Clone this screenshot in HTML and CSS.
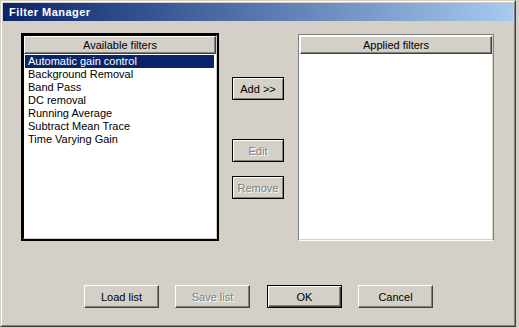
FILE: index.html
```html
<!DOCTYPE html>
<html>
<head>
<meta charset="utf-8">
<title>Filter Manager</title>
<link rel="stylesheet" href="styles.css">
</head>
<body>
<div class="window">
  <div class="frame">
    <div class="titlebar">Filter Manager</div>
    <div class="content">
      <div class="main">
        <div class="listbox focused">
          <div class="lb-inner">
            <div class="header">Available filters</div>
            <ul class="items">
              <li class="item selected">Automatic gain control</li>
              <li class="item">Background Removal</li>
              <li class="item">Band Pass</li>
              <li class="item">DC removal</li>
              <li class="item">Running Average</li>
              <li class="item">Subtract Mean Trace</li>
              <li class="item">Time Varying Gain</li>
            </ul>
          </div>
        </div>
        <div class="midcol">
          <div class="btn flat btn-add">Add &gt;&gt;</div>
          <div class="btn flat disabled btn-edit">Edit</div>
          <div class="btn flat disabled btn-remove">Remove</div>
        </div>
        <div class="listbox applied">
          <div class="lb-inner">
            <div class="header">Applied filters</div>
            <ul class="items"></ul>
          </div>
        </div>
      </div>
      <div class="actions">
        <div class="btn wide">Load list</div>
        <div class="btn wide disabled gap16">Save list</div>
        <div class="btn wide default gap17">OK</div>
        <div class="btn wide gap16">Cancel</div>
      </div>
    </div>
  </div>
</div>
</body>
</html>
```

FILE: styles.css
```css
html, body {
  margin: 0;
  padding: 0;
  background: #d4d0c8;
}
body {
  font-family: "Liberation Sans", Arial, sans-serif;
  font-size: 11px;
  color: #000;
}
.window {
  box-sizing: border-box;
  width: 516px;
  height: 327px;
  border: 1px solid;
  border-color: #d4d0c8 #404040 #404040 #d4d0c8;
  background: #d4d0c8;
}
.frame {
  box-sizing: border-box;
  height: 100%;
  border: 1px solid;
  border-color: #ffffff #808080 #808080 #ffffff;
  padding: 1px;
}
.titlebar {
  height: 18px;
  line-height: 18px;
  padding-left: 6px;
  background: linear-gradient(to right, #0a246a, #a6caf0);
  color: #fff;
  font-weight: bold;
  font-size: 11px;
  letter-spacing: 0.45px;
}
.main {
  display: flex;
  align-items: flex-start;
  padding: 12px 0 0 18px;
}
.listbox {
  box-sizing: border-box;
}
.listbox.focused {
  width: 198px;
  height: 208px;
  border: 2px solid #000;
}
.listbox.applied {
  width: 196px;
  height: 207px;
  margin-top: 1px;
  margin-left: 14px;
  border: 1px solid;
  border-color: #808080 #808080 #ffffff #808080;
}
.lb-inner {
  box-sizing: border-box;
  height: 100%;
  background: #fff;
  border: 1px solid;
}
.focused .lb-inner {
  border-color: #000 #d4d0c8 #d4d0c8 #000;
}
.applied .lb-inner {
  border-color: #ffffff #d4d0c8 #d4d0c8 #ffffff;
}
.header {
  box-sizing: border-box;
  height: 18px;
  line-height: 16px;
  text-align: center;
  background: #d4d0c8;
  border: 1px solid;
  border-color: #ffffff #404040 #404040 #ffffff;
  box-shadow: inset -1px -1px 0 #808080;
}
.items {
  list-style: none;
  margin: 0;
  padding: 1px 2px 0 1px;
}
.item {
  height: 13px;
  line-height: 13px;
  padding-left: 3px;
  white-space: nowrap;
}
.item.selected {
  background: #0a246a;
  color: #fff;
}
.midcol {
  display: flex;
  flex-direction: column;
  width: 52px;
  margin-left: 13px;
  padding-top: 44px;
}
.btn {
  box-sizing: border-box;
  height: 23px;
  display: flex;
  align-items: center;
  justify-content: center;
  background: #d4d0c8;
  border: 1px solid;
  border-color: #ffffff #404040 #404040 #ffffff;
  box-shadow: inset -1px -1px 0 #808080;
  white-space: nowrap;
}
.btn.flat {
  width: 52px;
  border: 1px solid #000;
  box-shadow: inset 1px 1px 0 #ffffff, inset -1px -1px 0 #808080;
}
.btn.default {
  border: 1px solid #000;
  box-shadow: inset 1px 1px 0 #ffffff, inset -1px -1px 0 #404040, inset -2px -2px 0 #808080;
}
.btn.disabled {
  color: #808080;
  text-shadow: 1px 1px 0 #ffffff;
}
.btn-edit {
  margin-top: 39px;
}
.btn-remove {
  margin-top: 14px;
}
.actions {
  display: flex;
  margin-top: 44px;
  padding-left: 81px;
}
.btn.wide {
  width: 75px;
}
.gap16 {
  margin-left: 16px;
}
.gap17 {
  margin-left: 17px;
}
```
